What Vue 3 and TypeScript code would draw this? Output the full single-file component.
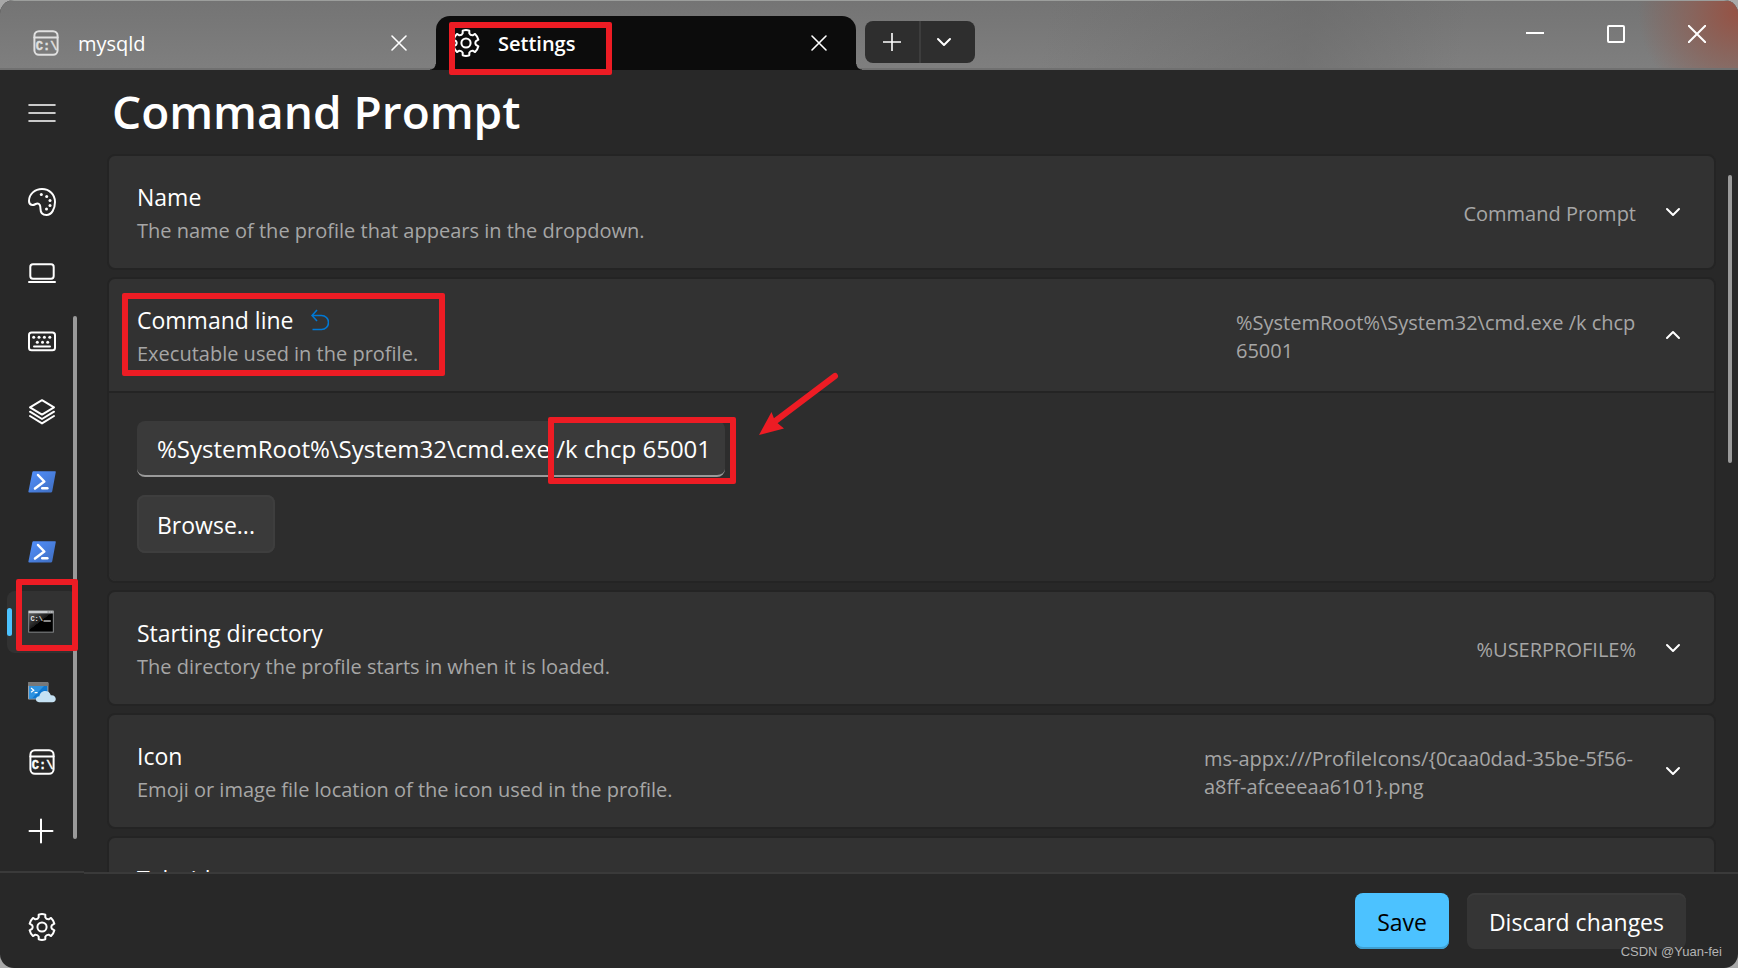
<script setup lang="ts">
import { ref } from 'vue'

interface NavItem {
  id: string
  label: string
}

interface Setting {
  id: string
  title: string
  description: string
  value: string
}

const navItems: NavItem[] = [
  { id: 'palette', label: 'Appearance' },
  { id: 'laptop', label: 'Rendering' },
  { id: 'keyboard', label: 'Actions' },
  { id: 'layers', label: 'Defaults' },
  { id: 'powershell', label: 'Windows PowerShell' },
  { id: 'powershell', label: 'PowerShell' },
  { id: 'cmd', label: 'Command Prompt' },
  { id: 'azure', label: 'Azure Cloud Shell' },
  { id: 'console', label: 'mysqld' },
  { id: 'plus', label: 'Add a new profile' },
]
const selected = ref(6)

const commandLine = ref('%SystemRoot%\\System32\\cmd.exe /k chcp 65001')
const expanded = ref('command')

const settings: Setting[] = [
  { id: 'name', title: 'Name', description: 'The name of the profile that appears in the dropdown.', value: 'Command Prompt' },
  { id: 'command', title: 'Command line', description: 'Executable used in the profile.', value: '%SystemRoot%\\System32\\cmd.exe /k chcp 65001' },
  { id: 'directory', title: 'Starting directory', description: 'The directory the profile starts in when it is loaded.', value: '%USERPROFILE%' },
  { id: 'icon', title: 'Icon', description: 'Emoji or image file location of the icon used in the profile.', value: 'ms-appx:///ProfileIcons/{0caa0dad-35be-5f56-a8ff-afceeeaa6101}.png' },
  { id: 'tab', title: 'Tab title', description: '', value: '' },
]

// Six-toothed gear outline in a 28x28 box
function gearOutline(): string {
  const at = (radius: number, degrees: number): string => {
    const a = (degrees * Math.PI) / 180
    return `${(14 + radius * Math.cos(a)).toFixed(2)} ${(14 + radius * Math.sin(a)).toFixed(2)}`
  }
  let d = ''
  for (let k = 0; k < 6; k++) {
    const t = -90 + k * 60
    d += `${k === 0 ? 'M' : 'L'}${at(12.8, t - 15)}Q${at(13.4, t)} ${at(12.8, t + 15)}`
    d += `L${at(10.2, t + 19)}Q${at(8.7, t + 30)} ${at(10.2, t + 41)}`
  }
  return d + 'Z'
}
const gear = gearOutline()
</script>

<template>
  <div class="window">
    <svg class="defs" aria-hidden="true">
      <defs>
        <linearGradient id="psFill" x1="0" y1="0" x2="1" y2="1">
          <stop offset="0" stop-color="#5391fe" />
          <stop offset="1" stop-color="#3e6dbf" />
        </linearGradient>
        <linearGradient id="cmdFill" x1="0" y1="0" x2="1" y2="1">
          <stop offset="0" stop-color="#5a5a5a" />
          <stop offset="0.45" stop-color="#1a1a1a" />
          <stop offset="0.46" stop-color="#000" />
        </linearGradient>
        <symbol id="i-gear" viewBox="0 0 28 28">
          <path :d="gear" class="line" />
          <circle cx="14" cy="14" r="4.6" class="line" />
        </symbol>
        <symbol id="i-palette" viewBox="0 0 28 28">
          <path class="line" d="M1 13C1 6 7 1 14 1C21.5 1 27 6.5 27 14C27 21 23.5 27 18.5 27C14.5 27 12.5 24.5 12.5 21C12.5 18 11.5 15.5 9.5 15.5C7.5 15.5 6.5 17.3 4.2 17C2 16.7 1 15.5 1 13Z" />
          <g fill="#fff">
            <circle cx="13.3" cy="6.4" r="1.5" /><circle cx="18.7" cy="8.5" r="1.5" /><circle cx="22" cy="12.4" r="1.5" /><circle cx="22" cy="17.5" r="1.5" /><circle cx="18.5" cy="21" r="1.5" />
          </g>
        </symbol>
        <symbol id="i-laptop" viewBox="0 0 28 28">
          <rect x="2.3" y="6.3" width="23.4" height="14.4" rx="2.6" class="line" />
          <path class="line" d="M1 24H27" />
        </symbol>
        <symbol id="i-keyboard" viewBox="0 0 28 28">
          <rect x="1" y="4.5" width="26" height="17.8" rx="2.6" class="line" />
          <g fill="#fff">
            <circle cx="5.7" cy="9.2" r="1.5" /><circle cx="11" cy="9.2" r="1.5" /><circle cx="16.4" cy="9.2" r="1.5" /><circle cx="21.8" cy="9.2" r="1.5" />
            <circle cx="9.3" cy="14.2" r="1.5" /><circle cx="14.5" cy="14.2" r="1.5" /><circle cx="19.7" cy="14.2" r="1.5" />
          </g>
          <path class="line" d="M6 18.4H22" />
        </symbol>
        <symbol id="i-layers" viewBox="0 0 28 28">
          <path class="line" d="M14 2.2L26 9.3L14 16.6L2 9.3ZM2 13.7L14 21L26 13.7M2 18L14 25.4L26 18" />
        </symbol>
        <symbol id="i-powershell" viewBox="0 0 28 28">
          <path d="M5.4 3.3H27.2Q27.9 3.3 27.8 4L24.2 23.6Q24 24.4 23.2 24.4H1Q.2 24.4 .4 23.6L4.4 4Q4.6 3.3 5.4 3.3Z" fill="url(#psFill)" />
          <path d="M10 7L16.3 13.5L7 20.6" fill="none" stroke="#fff" stroke-width="2.5" stroke-linecap="round" stroke-linejoin="round" />
          <path d="M14.2 20.2H19.4" fill="none" stroke="#fff" stroke-width="2.4" stroke-linecap="round" />
        </symbol>
        <symbol id="i-cmd" viewBox="0 0 28 28">
          <rect x="0" y="2.4" width="26" height="22.4" rx="0.8" fill="#77797b" />
          <rect x="0.6" y="2.8" width="24.8" height="2.4" fill="#c9cccf" />
          <path d="M19.5 4H20.8M21.6 4H22.8M23.6 4H24.8" stroke="#666" stroke-width="1.2" />
          <rect x="1.2" y="5.6" width="23.6" height="18" fill="url(#cmdFill)" />
          <text x="2.4" y="13.2" class="mono" font-size="7" fill="#e8e8e8">C:\</text>
          <path d="M15.5 13H22.8" stroke="#e8e8e8" stroke-width="1.2" />
        </symbol>
        <symbol id="i-azure" viewBox="0 0 28 28">
          <rect x="0" y="4.2" width="20.4" height="17.4" rx="0.8" fill="#a0a4a8" />
          <rect x="0" y="4.2" width="20.4" height="3.8" rx="0.8" fill="#787878" />
          <rect x="1" y="8" width="18.4" height="12.6" fill="#0f78d0" />
          <path d="M1 8H16L4 20.6H1Z" fill="#2f93e0" />
          <path d="M3 10L5.8 12.2L3 14.2M6.6 14.6H9.6" fill="none" stroke="#fff" stroke-width="1.1" />
          <path d="M11 24.2C6.6 24 7 18.2 11.4 18.2C12.2 11.6 21.4 11 22.8 17.2C28.6 16.4 29.6 24 24.4 24.2Z" fill="#c5e1f3" />
        </symbol>
        <symbol id="i-console" viewBox="0 0 28 28">
          <rect x="2.4" y="2.2" width="23.2" height="23.6" rx="4.5" class="line" />
          <path class="line" d="M2.4 8.4H25.6" />
          <text x="3.8" y="21" class="mono" font-size="12" fill="currentColor" stroke="currentColor" stroke-width="0.4">C:\</text>
        </symbol>
        <symbol id="i-plus" viewBox="0 0 28 28">
          <path class="line" d="M13 1.5V24.5M1.5 13H24.5" />
        </symbol>
        <symbol id="i-menu" viewBox="0 0 28 28">
          <path class="line thin" d="M1 6H27M1 14H27M1 22H27" />
        </symbol>
        <symbol id="i-close" viewBox="0 0 18 18">
          <path class="line thin" d="M2 2L16 16M16 2L2 16" />
        </symbol>
        <symbol id="i-chevron" viewBox="0 0 18 18">
          <path class="line" d="M3 6L9 12L15 6" />
        </symbol>
      </defs>
    </svg>

    <header class="titlebar">
      <div class="tab">
        <svg class="icon tab-icon"><use href="#i-console" /></svg>
        <span class="tab-name">mysqld</span>
        <button class="bare tab-close" aria-label="Close mysqld"><svg><use href="#i-close" /></svg></button>
      </div>
      <div class="tab active">
        <svg class="icon tab-icon"><use href="#i-gear" /></svg>
        <span class="tab-name">Settings</span>
        <button class="bare tab-close" aria-label="Close Settings"><svg><use href="#i-close" /></svg></button>
        <span class="mark mark-tab"></span>
      </div>
      <div class="new-tab">
        <button class="bare" aria-label="New tab">
          <svg class="new-plus" viewBox="0 0 18 18"><path class="line thin" d="M9 0V18M0 9H18" /></svg>
        </button>
        <button class="bare" aria-label="Open a new tab menu"><svg class="chevron"><use href="#i-chevron" /></svg></button>
      </div>
      <div class="caption">
        <button class="bare" aria-label="Minimize"><svg viewBox="0 0 18 18"><path class="line" d="M0 8H18" /></svg></button>
        <button class="bare" aria-label="Maximize"><svg viewBox="0 0 18 18"><rect x="1" y="1" width="16" height="16" rx="1" class="line" /></svg></button>
        <button class="bare" aria-label="Close"><svg viewBox="0 0 18 18"><path class="line" d="M.5 .5L17.5 17.5M17.5 .5L.5 17.5" /></svg></button>
      </div>
    </header>

    <div class="body">
      <aside class="sidebar">
        <button class="bare nav-item menu" aria-label="Toggle navigation"><svg class="icon"><use href="#i-menu" /></svg></button>
        <nav class="nav">
          <button
            v-for="(item, index) in navItems"
            :key="index"
            class="bare nav-item"
            :class="{ selected: index === selected }"
            :aria-label="item.label"
            @click="selected = index"
          >
            <svg class="icon"><use :href="'#i-' + item.id" /></svg>
            <span v-if="item.id === 'cmd'" class="mark mark-nav"></span>
          </button>
          <span class="scroll nav-scroll"></span>
        </nav>
        <div class="sidebar-foot">
          <button class="bare nav-item" aria-label="Open JSON file"><svg class="icon"><use href="#i-gear" /></svg></button>
        </div>
      </aside>

      <main class="main">
        <h1>Command Prompt</h1>
        <div class="list-area">
          <section v-for="s in settings" :key="s.id" class="card">
            <div class="card-head">
              <div class="card-text">
                <div class="card-title">
                  <h2>{{ s.title }}</h2>
                  <button v-if="s.id === 'command'" class="bare reset" aria-label="Reset to inherited value">
                    <svg viewBox="0 0 18 22"><path d="M6 1L1 6.5L6 12M1 6.5H10.5A6.5 6.5 0 0 1 10.5 20.5H1.5" /></svg>
                  </button>
                </div>
                <p>{{ s.description }}</p>
                <span v-if="s.id === 'command'" class="mark mark-title"></span>
              </div>
              <span class="value" :class="'value-' + s.id">{{ s.value }}</span>
              <button class="bare expand" :aria-label="'Expand ' + s.title" :aria-expanded="expanded === s.id">
                <svg class="chevron" :class="{ up: expanded === s.id }"><use href="#i-chevron" /></svg>
              </button>
            </div>
            <div v-if="expanded === s.id" class="card-body">
              <div class="field">
                <input v-model="commandLine" type="text" aria-label="Command line" spellcheck="false" />
                <span class="mark mark-input"></span>
                <svg class="arrow" viewBox="0 0 84 68">
                  <path d="M77 6L18 50.5" stroke="#ed1c24" stroke-width="6" stroke-linecap="round" />
                  <path d="M1 65L13.5 42L17 51L26 58.5Z" fill="#ed1c24" />
                </svg>
              </div>
              <button class="btn browse">Browse...</button>
            </div>
          </section>
          <span class="scroll main-scroll"></span>
        </div>
        <footer class="actions">
          <button class="btn save">Save</button>
          <button class="btn discard">Discard changes</button>
          <span class="credit">CSDN @Yuan-fei</span>
        </footer>
      </main>
    </div>
  </div>
</template>

<style>
body {
  background: #a8a8a8;
}
</style>

<style scoped>
* {
  box-sizing: border-box;
}
.window {
  height: 100vh;
  display: flex;
  flex-direction: column;
  overflow: hidden;
  border-radius: 14px;
  background: #282828;
  color: #fff;
  font-family: 'Open Sans', 'Noto Sans', sans-serif;
}
.defs {
  position: absolute;
  width: 0;
  height: 0;
}
.line {
  fill: none;
  stroke: currentColor;
  stroke-width: 2;
  stroke-linecap: round;
  stroke-linejoin: round;
}
.thin {
  stroke-width: 1.6;
}
.mono {
  font-family: 'Liberation Mono', monospace;
  font-weight: 700;
}
.icon {
  width: 28px;
  height: 28px;
  flex: none;
}
.bare {
  display: flex;
  align-items: center;
  justify-content: center;
  padding: 0;
  border: 0;
  background: none;
  color: inherit;
  font: inherit;
}
.mark {
  position: absolute;
  z-index: 2;
  border: 6px solid #ed1c24;
  border-radius: 2px;
  pointer-events: none;
}

/* Title bar */
.titlebar {
  display: flex;
  flex: none;
  height: 70px;
  padding-top: 15px;
  border-top: 1px solid #9c9e9c;
  background:
    linear-gradient(#707070, #707070) bottom / 100% 2px no-repeat,
    radial-gradient(circle at 100% 15%, #965244 0, rgba(140, 96, 86, 0.8) 45px, rgba(124, 120, 119, 0) 100px),
    linear-gradient(100deg, transparent 60%, rgba(104, 104, 104, 0.5) 75%, transparent 84%),
    linear-gradient(#747474, #7f7f7f);
}
.tab {
  position: relative;
  display: flex;
  align-items: center;
  width: 420px;
  padding: 0 28px 0 16px;
}
.tab:first-child {
  width: 436px;
  padding-left: 32px;
}
.tab:first-child .tab-icon {
  color: #e0e0e0;
}
.tab-name {
  flex: 1;
  padding: 2px 0 0 18px;
  font-size: 20px;
  line-height: 28px;
}
.active {
  background: #0c0c0c;
  border-radius: 14px 14px 0 0;
}
.active .tab-name {
  font-weight: 600;
}
.active::before,
.active::after {
  content: '';
  position: absolute;
  bottom: 0;
  width: 6px;
  height: 6px;
}
.active::before {
  right: 100%;
  background: radial-gradient(circle at 0 0, transparent 5px, #0c0c0c 6px);
}
.active::after {
  left: 100%;
  background: radial-gradient(circle at 100% 0, transparent 5px, #0c0c0c 6px);
}
.tab-close svg {
  width: 18px;
  height: 18px;
}
.mark-tab {
  left: 13px;
  top: 6px;
  width: 163px;
  height: 53px;
}
.new-tab {
  display: flex;
  width: 110px;
  height: 42px;
  margin: 5px 0 0 9px;
  border-radius: 8px;
  background: #2e2e2e;
}
.new-tab .bare {
  width: 54px;
}
.new-tab .bare + .bare {
  width: 56px;
  border-left: 2px solid #3d3d3d;
  padding-right: 8px;
}
.new-plus {
  width: 18px;
  height: 18px;
}
.chevron {
  width: 18px;
  height: 18px;
}
.up {
  transform: rotate(180deg);
}
.caption {
  display: flex;
  gap: 63px;
  margin-left: auto;
  padding-right: 32px;
}
.caption .bare {
  height: 36px;
}
.caption svg {
  width: 18px;
  height: 18px;
}

/* Navigation */
.body {
  display: flex;
  flex: 1;
  min-height: 0;
}
.sidebar {
  display: flex;
  flex-direction: column;
  flex: none;
  width: 84px;
  padding-top: 12px;
}
.nav {
  position: relative;
  display: flex;
  flex-direction: column;
  gap: 8px;
  padding-top: 27px;
}
.nav-item {
  position: relative;
  flex: none;
  width: 70px;
  height: 62px;
  margin-left: 7px;
  border-radius: 8px;
}
.selected {
  background: #323232;
}
.selected::before {
  content: '';
  position: absolute;
  left: 0;
  top: 17px;
  width: 5px;
  height: 28px;
  border-radius: 3px;
  background: #4cc2ff;
}
.mark-nav {
  left: 9px;
  top: -12px;
  width: 62px;
  height: 72px;
}
.scroll {
  position: absolute;
  width: 4px;
  border-radius: 2px;
  background: #9a9a9a;
}
.nav-scroll {
  left: 73px;
  top: 172px;
  bottom: 24px;
}
.sidebar-foot {
  margin-top: auto;
  padding: 23px 0 10px;
  border-top: 2px solid #3a3a3a;
}

/* Settings page */
.main {
  display: flex;
  flex: 1;
  flex-direction: column;
  min-width: 0;
}
h1 {
  margin: 0;
  padding: 9px 28px 11px;
  font-size: 46px;
  font-weight: 600;
  line-height: 64px;
}
.list-area {
  position: relative;
  display: flex;
  flex: 1;
  flex-direction: column;
  gap: 7px;
  min-height: 0;
  overflow: hidden;
  padding: 0 22px 0 23px;
}
.main-scroll {
  right: 6px;
  top: 21px;
  height: 288px;
}
.card {
  flex: none;
  border: 2px solid #242424;
  border-radius: 8px;
  background: #323232;
}
.card-head {
  display: flex;
  align-items: center;
  height: 112px;
  padding: 0 32px 0 28px;
}
.card-text {
  position: relative;
  flex: 1;
  padding-top: 4px;
}
.card-title {
  display: flex;
  align-items: center;
  gap: 18px;
}
h2,
p {
  margin: 0;
  font-weight: 400;
}
h2 {
  font-size: 23px;
  line-height: 34px;
}
p {
  min-height: 34px;
  font-size: 20px;
  line-height: 34px;
  color: #a6a6a6;
}
.reset svg {
  width: 18px;
  height: 22px;
  fill: none;
  stroke: #0078d4;
  stroke-width: 1.6;
}
.mark-title {
  left: -15px;
  top: -6px;
  width: 323px;
  height: 83px;
}
.value {
  max-width: 432px;
  padding-top: 3px;
  font-size: 20px;
  line-height: 28px;
  color: #a6a6a6;
}
.value-command {
  max-width: 400px;
}
.expand {
  margin-left: 28px;
}
.card-body {
  display: flex;
  flex-direction: column;
  align-items: flex-start;
  gap: 18px;
  padding: 28px;
  border-top: 2px solid #242424;
  border-radius: 0 0 8px 8px;
  background: #2d2d2d;
}
.field {
  position: relative;
  width: 588px;
}
input {
  display: block;
  width: 100%;
  height: 56px;
  padding: 0 12px 0 20px;
  border: 0;
  border-bottom: 2px solid #9a9a9a;
  border-radius: 8px;
  background: #3a3a3a;
  color: #fff;
  font: inherit;
  font-size: 24px;
}
.mark-input {
  left: 411px;
  top: -4px;
  width: 188px;
  height: 67px;
}
.arrow {
  position: absolute;
  left: 621px;
  top: -51px;
  width: 84px;
  height: 68px;
}
.btn {
  height: 56px;
  padding: 2px 22px 0;
  border: 0;
  border-radius: 8px;
  background: #353535;
  color: #fff;
  font: inherit;
  font-size: 23px;
  box-shadow: inset 0 2px #3a3a3a;
}
.browse {
  height: 58px;
  padding: 2px 20px 0;
  background: #3a3a3a;
  box-shadow: inset 0 0 0 2px #3e3e3e;
}
.actions {
  position: relative;
  display: flex;
  flex: none;
  justify-content: flex-end;
  gap: 18px;
  padding: 19px 52px 19px 0;
  border-top: 2px solid #3a3a3a;
}
.save {
  background: #4cc2ff;
  color: #000;
  box-shadow: inset 0 -2px #3fa0d2;
}
.credit {
  position: absolute;
  right: 16px;
  bottom: 8px;
  font-family: 'Liberation Sans', sans-serif;
  font-size: 13px;
  line-height: 16px;
  color: #b4b4b4;
}
</style>
